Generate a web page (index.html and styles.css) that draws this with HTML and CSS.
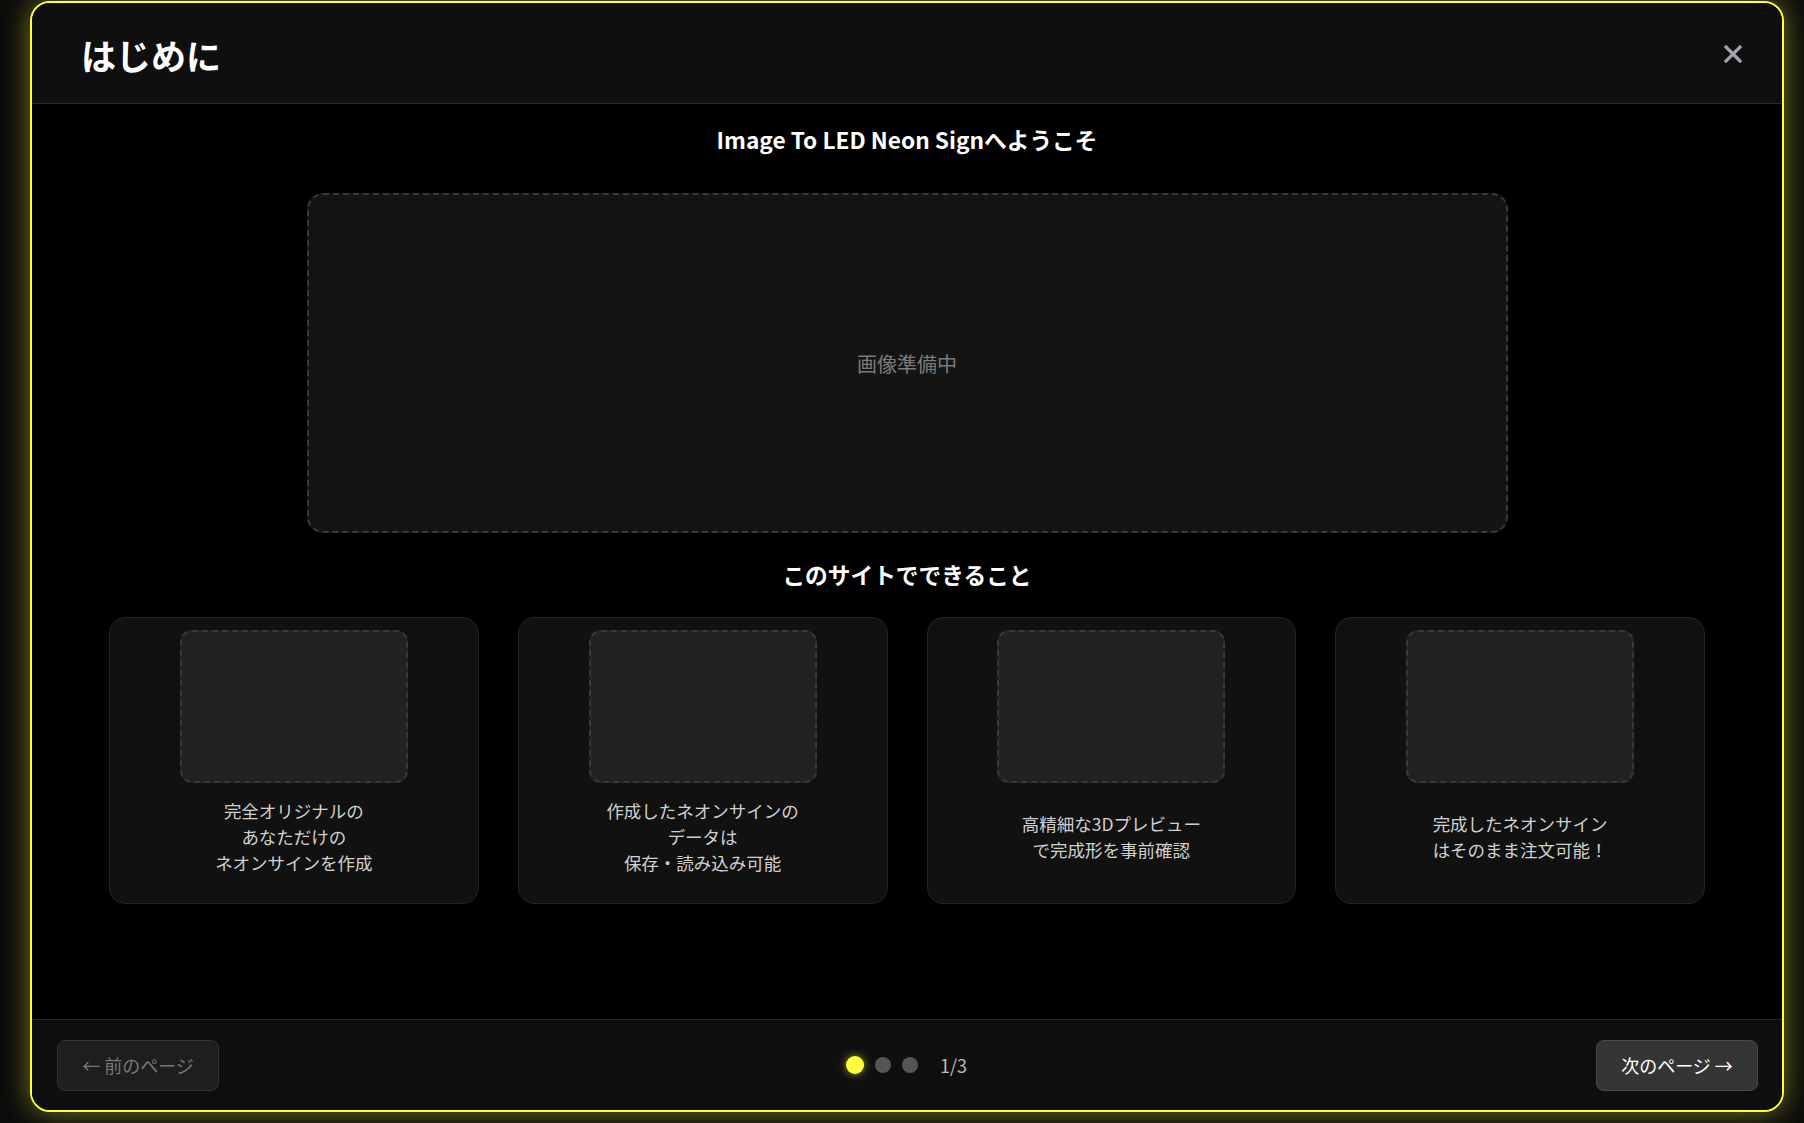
FILE: index.html
```html
<!DOCTYPE html>
<html lang="ja">
<head>
    <meta charset="UTF-8">
    <meta name="viewport" content="width=device-width, initial-scale=1.0">
    <title>はじめに</title>
    <link rel="stylesheet" href="styles.css">
</head>
<body>
    <div class="modal">
        <header class="modal-header">
            <h1>はじめに</h1>
            <button class="close-btn" aria-label="閉じる">
                <svg width="18" height="18" viewBox="0 0 18 18">
                    <path d="M2 2 L16 16 M16 2 L2 16" stroke="currentColor" stroke-width="3.2" stroke-linecap="square"/>
                </svg>
            </button>
        </header>

        <main class="modal-body">
            <h2 class="section-title">Image To LED Neon Signへようこそ</h2>
            <div class="hero-placeholder">画像準備中</div>

            <h2 class="section-title features-title">このサイトでできること</h2>
            <div class="features">
                <div class="feature-card">
                    <div class="feature-thumb"></div>
                    <p class="feature-text">完全オリジナルの<br>あなただけの<br>ネオンサインを作成</p>
                </div>
                <div class="feature-card">
                    <div class="feature-thumb"></div>
                    <p class="feature-text">作成したネオンサインの<br>データは<br>保存・読み込み可能</p>
                </div>
                <div class="feature-card">
                    <div class="feature-thumb"></div>
                    <p class="feature-text">高精細な3Dプレビュー<br>で完成形を事前確認</p>
                </div>
                <div class="feature-card">
                    <div class="feature-thumb"></div>
                    <p class="feature-text">完成したネオンサイン<br>はそのまま注文可能！</p>
                </div>
            </div>
        </main>

        <footer class="modal-footer">
            <button class="nav-btn nav-btn-prev" disabled>← 前のページ</button>
            <div class="pager">
                <span class="dot active"></span>
                <span class="dot"></span>
                <span class="dot"></span>
                <span class="page-count">1/3</span>
            </div>
            <button class="nav-btn nav-btn-next">次のページ →</button>
        </footer>
    </div>
</body>
</html>
```

FILE: styles.css
```css
* {
    box-sizing: border-box;
}

body {
    margin: 0;
    height: 1123px;
    overflow: hidden;
    background-color: #0b0b0b;
    font-family: "Noto Sans CJK JP", "Noto Sans", sans-serif;
    color: #fff;
}

.modal {
    margin: 1px 0 0 30px;
    width: 1754px;
    height: 1111px;
    display: flex;
    flex-direction: column;
    border: 2px solid #ffff3c;
    border-radius: 20px;
    background-color: #000;
    box-shadow: 0 0 28px rgba(255, 255, 60, 0.45);
    overflow: hidden;
}

.modal-header {
    height: 101px;
    flex-shrink: 0;
    display: flex;
    align-items: center;
    justify-content: space-between;
    padding: 2px 39px 0 49px;
    background-color: #0f0f0f;
    border-bottom: 1px solid #2a2a2a;
}

.modal-header h1 {
    margin: 0;
    font-size: 35px;
    font-weight: 700;
}

.close-btn {
    width: 20px;
    height: 20px;
    padding: 0;
    border: none;
    background: none;
    color: #a0a4ab;
    display: flex;
    align-items: center;
    justify-content: center;
    cursor: pointer;
}

.modal-body {
    flex: 1;
    display: flex;
    flex-direction: column;
    align-items: center;
    padding-top: 18px;
}

.section-title {
    margin: 0;
    font-size: 22.7px;
    line-height: 36px;
    font-weight: 700;
}

.hero-placeholder {
    margin-top: 35px;
    width: 1201px;
    height: 340px;
    display: flex;
    align-items: center;
    justify-content: center;
    background-color: #141414;
    border: 2px dashed #3a3a3a;
    border-radius: 16px;
    color: #7a7a7a;
    font-size: 20px;
}

.features-title {
    margin-top: 24px;
}

.features {
    margin-top: 24px;
    width: 1596px;
    display: grid;
    grid-template-columns: repeat(4, 1fr);
    gap: 39px;
}

.feature-card {
    display: flex;
    flex-direction: column;
    align-items: center;
    padding: 12px 12px 19px;
    background-color: #111;
    border: 1px solid #232323;
    border-radius: 16px;
}

.feature-thumb {
    width: 228px;
    height: 153px;
    background-color: #222;
    border: 2px dashed #383838;
    border-radius: 12px;
}

.feature-text {
    margin: 7px 0 0;
    height: 94px;
    display: flex;
    align-items: center;
    justify-content: center;
    text-align: center;
    font-size: 17.5px;
    line-height: 1.47;
    color: #d0d0d0;
}

.modal-footer {
    height: 91px;
    flex-shrink: 0;
    display: flex;
    align-items: center;
    justify-content: space-between;
    padding: 0 24px 0 25px;
    background-color: #0f0f0f;
    border-top: 1px solid #262626;
}

.nav-btn {
    height: 51px;
    width: 162px;
    padding: 0;
    border-radius: 8px;
    font-family: inherit;
    font-size: 18px;
    cursor: pointer;
}

.nav-btn-prev {
    background-color: #1e1e1e;
    border: 1px solid #333;
    color: #777;
    cursor: not-allowed;
}

.nav-btn-next {
    background-color: #353535;
    border: 1px solid #4a4a4a;
    color: #fff;
}

.pager {
    display: flex;
    align-items: center;
    gap: 11px;
    margin-right: 2px;
}

.dot {
    width: 16px;
    height: 16px;
    border-radius: 50%;
    background-color: #555;
}

.dot.active {
    width: 18px;
    height: 18px;
    background-color: #ffff3c;
    box-shadow: 0 0 8px rgba(255, 255, 60, 0.6);
}

.page-count {
    margin-left: 11px;
    font-size: 18px;
    color: #bbb;
}
```
